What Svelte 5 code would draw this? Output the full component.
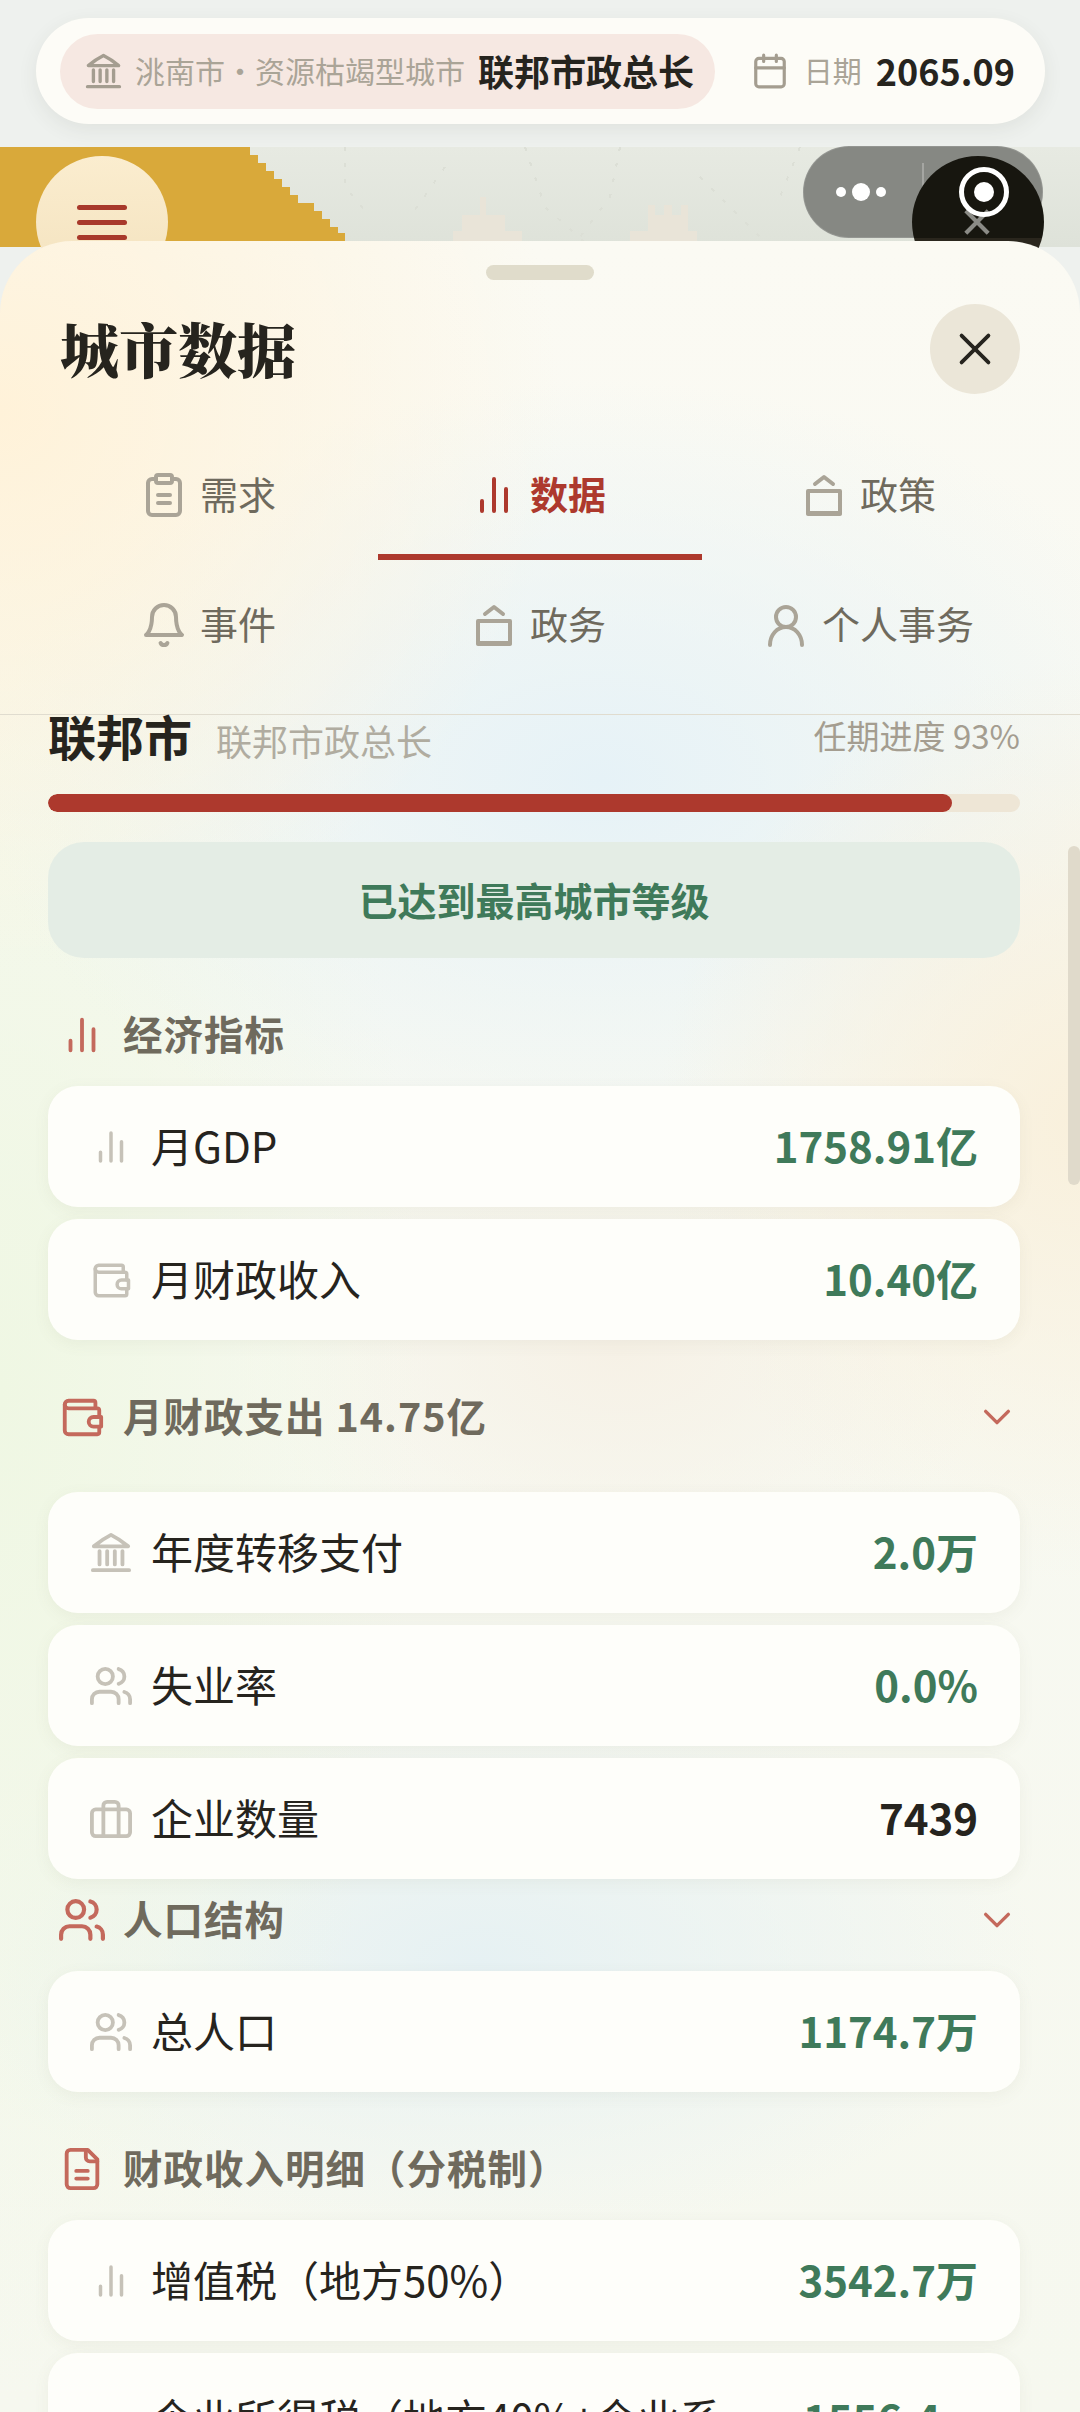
<script>
  const tabs = [
    { label: '需求', icon: 'clipboard' },
    { label: '数据', icon: 'bars', active: true },
    { label: '政策', icon: 'house' },
    { label: '事件', icon: 'bell' },
    { label: '政务', icon: 'house' },
    { label: '个人事务', icon: 'user' }
  ];

  const groups = [
    {
      title: '经济指标',
      icon: 'bars',
      rows: [
        { icon: 'bars', label: '月GDP', value: '1758.91亿' },
        { icon: 'wallet', label: '月财政收入', value: '10.40亿' }
      ]
    },
    {
      title: '月财政支出 14.75亿',
      icon: 'wallet',
      fold: true,
      open: true,
      rows: [
        { icon: 'bank', label: '年度转移支付', value: '2.0万' },
        { icon: 'users', label: '失业率', value: '0.0%' },
        { icon: 'case', label: '企业数量', value: '7439', plain: true }
      ]
    },
    {
      title: '人口结构',
      icon: 'users',
      fold: true,
      tight: true,
      rows: [{ icon: 'users', label: '总人口', value: '1174.7万' }]
    },
    {
      title: '财政收入明细（分税制）',
      icon: 'file',
      rows: [
        { icon: 'bars', label: '增值税（地方50%）', value: '3542.7万' },
        { icon: 'bars', label: '企业所得税（地方40%+企业系数）', value: '1556.4万', wrap: true }
      ]
    }
  ];

  // these three run edge to edge in the reference, so crop their box a little
  const tightBox = ['users', 'bank', 'case'];
</script>

{#snippet glyph(name, cls)}
  <svg class={cls} viewBox={tightBox.includes(name) ? '1 1 22 22' : '0 0 24 24'} fill="none" stroke="currentColor" stroke-linecap="round" stroke-linejoin="round">
    {#if name === 'bars'}
      <path d="M6 20v-5M12 20V4M18 20V9" />
    {:else if name === 'clipboard'}
      <rect x="8" y="2" width="8" height="4" rx="1" />
      <path d="M16 4h2a2 2 0 0 1 2 2v14a2 2 0 0 1-2 2H6a2 2 0 0 1-2-2V6a2 2 0 0 1 2-2h2" />
      <path d="M9 12h6M9 16h6" />
    {:else if name === 'house'}
      <path d="M7.500 6.500l4.500-3.500 4.500 3.500" />
      <path d="M4 10h16v11.500H4z" />
      <path d="M4 21h16" />
    {:else if name === 'bell'}
      <path d="M6 8a6 6 0 0 1 12 0c0 7 3 9 3 9H3s3-2 3-9" />
      <path d="M10.300 21a1.900 1.900 0 0 0 3.400 0" />
    {:else if name === 'user'}
      <circle cx="12" cy="8" r="5" />
      <path d="M4 22c0-5 3.500-9 8-9s8 4 8 9" />
    {:else if name === 'users'}
      <circle cx="9" cy="7" r="4" />
      <path d="M2 21v-2a4 4 0 0 1 4-4h6a4 4 0 0 1 4 4v2" />
      <path d="M16 3.130a4 4 0 0 1 0 7.750" />
      <path d="M22 21v-2a4 4 0 0 0-3-3.870" />
    {:else if name === 'wallet'}
      <path d="M19 7V4.500a1 1 0 0 0-1-1H5a2 2 0 0 0 0 4h15a1 1 0 0 1 1 1V12" />
      <path d="M3 5.500V19a2 2 0 0 0 2 2h15a1 1 0 0 0 1-1v-3" />
      <path d="M18 12a2 2 0 0 0 0 5h4v-5z" />
    {:else if name === 'bank'}
      <path d="M2.500 21h19M6 18v-7M10 18v-7M14 18v-7M18 18v-7" />
      <path d="M3 8.500C6 6 9 4 12 2.500c3 1.500 6 3.500 9 6z" />
    {:else if name === 'case'}
      <rect x="2" y="7" width="20" height="14" rx="2" />
      <path d="M16 21V5a2 2 0 0 0-2-2h-4a2 2 0 0 0-2 2v16" />
    {:else if name === 'file'}
      <path d="M15 2H6a2 2 0 0 0-2 2v16a2 2 0 0 0 2 2h12a2 2 0 0 0 2-2V7z" />
      <path d="M14 2v4a2 2 0 0 0 2 2h4" />
      <path d="M9 13h6M9 17h6" />
    {:else if name === 'calendar'}
      <path d="M8 2v4M16 2v4M3 10h18" />
      <rect x="3" y="4" width="18" height="18" rx="2" />
    {:else if name === 'chevron'}
      <path d="M4 8l8 8 8-8" />
    {:else if name === 'close'}
      <path d="M5 5l14 14M19 5L5 19" />
    {/if}
  </svg>
{/snippet}

<div class="screen" lang="zh-CN">
  <header class="topbar">
    <div class="city-pill">
      {@render glyph('bank', 'pill-icon')}
      <span class="city-name">洮南市·资源枯竭型城市</span>
      <strong class="role">联邦市政总长</strong>
    </div>
    <div class="date">
      {@render glyph('calendar', 'date-icon')}
      <span class="date-label">日期</span>
      <strong class="date-value">2065.09</strong>
    </div>
  </header>

  <div class="map">
    <svg class="tiles" viewBox="0 0 1080 100" preserveAspectRatio="none" shape-rendering="crispEdges">
      <path fill="#d9a93a" d="M0 0H250V8H258V16H266V24H274V32H282V40H290V48H298V56H314V64H322V72H330V80H338V86H345V100H0Z" />
      <path fill="#e9e4d8" d="M480 50H486V68H505V84H522V100H453V84H462V68H480Z" />
      <path fill="#e9e4d8" d="M648 58H655V68H664V58H672V68H681V58H688V84H697V100H630V84H648Z" />
      <path fill="none" stroke="#dcdfd6" stroke-width="2" stroke-dasharray="4 12" d="M345 0V40L370 70M445 20L410 70M525 0L545 60L590 100M620 0L610 50L580 90M700 30L770 100M800 0L780 50" />
    </svg>
  </div>

  <button class="menu-btn" aria-label="菜单">
    <span></span><span></span><span></span>
  </button>

  <div class="capsule">
    <span class="dots"><i></i><i class="big"></i><i></i></span>
    <span class="capsule-line"></span>
  </div>
  <div class="round-dark">
    <svg class="dark-x" viewBox="0 0 30 30"><path d="M3 3l24 24M27 3L3 27" /></svg>
    <span class="target"><i></i></span>
  </div>

  <section class="sheet">
    <div class="handle"></div>
    <div class="sheet-head">
      <h1>城市数据</h1>
      <button class="close" aria-label="关闭">{@render glyph('close', 'close-icon')}</button>
    </div>

    <nav class="tabs">
      {#each tabs as tab}
        <div class="tab" class:active={tab.active}>
          {@render glyph(tab.icon, 'tab-icon')}
          <span>{tab.label}</span>
        </div>
      {/each}
    </nav>

    <div class="content">
      <div class="city-row">
        <strong class="city-title">联邦市</strong>
        <span class="city-sub">联邦市政总长</span>
        <span class="term">任期进度 93%</span>
      </div>
      <div class="progress"><div class="progress-fill" style="width: 93%"></div></div>
      <div class="banner"><span>已达到最高城市等级</span></div>

      {#each groups as group}
        <div class="group" class:tight={group.tight}>
          <div class="group-head" class:open={group.open}>
            {@render glyph(group.icon, 'head-icon')}
            <span class="group-title">{group.title}</span>
            {#if group.fold}
              {@render glyph('chevron', 'fold-icon')}
            {/if}
          </div>
          <div class="rows">
            {#each group.rows as row}
              <div class="row" class:multi={row.wrap}>
                {@render glyph(row.icon, 'row-icon')}
                <span class="row-label">{row.label}</span>
                <span class="row-value" class:plain={row.plain} class:wrap={row.wrap}>{row.value}</span>
              </div>
            {/each}
          </div>
        </div>
      {/each}
    </div>

    <div class="scroll-thumb"></div>
  </section>
</div>

<style>
  :global(body) {
    margin: 0;
    background: #eff2ef;
  }

  .screen {
    position: relative;
    width: 1080px;
    height: 2412px;
    overflow: hidden;
    background: #eef1ee;
    font-family: "Noto Sans CJK SC", "Noto Sans", sans-serif;
    color: #26241e;
  }

  .topbar {
    position: relative;
    z-index: 3;
    box-sizing: border-box;
    display: flex;
    align-items: center;
    width: 1009px;
    height: 106px;
    margin: 18px 0 0 36px;
    padding: 0 30px 0 24px;
    background: #fdfcf7;
    border-radius: 53px;
    box-shadow: 0 6px 20px rgba(70, 70, 50, 0.08);
  }

  .city-pill {
    display: flex;
    align-items: center;
    box-sizing: border-box;
    width: 657px;
    height: 75px;
    padding: 0 0 0 25px;
    background: #f6e8e2;
    border-radius: 38px;
    white-space: nowrap;
  }

  :global(.pill-icon) {
    width: 37px;
    height: 37px;
    margin-right: 13px;
    color: #a49d90;
    stroke-width: 2;
  }

  .city-name {
    padding-bottom: 3px;
    font-size: 30px;
    color: #aaa497;
  }

  .role {
    margin-left: 13px;
    padding-bottom: 3px;
    font-size: 36px;
    font-weight: 700;
    color: #26241e;
  }

  .date {
    display: flex;
    align-items: center;
    margin-left: 36px;
    white-space: nowrap;
  }

  :global(.date-icon) {
    width: 38px;
    height: 38px;
    color: #a49d90;
    stroke-width: 2;
  }

  .date-label {
    margin-left: 15px;
    padding-bottom: 2px;
    font-size: 29px;
    color: #aaa497;
  }

  .date-value {
    margin-left: 14px;
    padding-bottom: 2px;
    font-size: 36px;
    font-weight: 700;
  }

  .map {
    position: absolute;
    left: 0;
    top: 147px;
    width: 1080px;
    height: 100px;
    background: linear-gradient(#e7eae2, #dee2d9);
  }

  .tiles {
    display: block;
    width: 100%;
    height: 100%;
  }

  .menu-btn {
    position: absolute;
    left: 36px;
    top: 156px;
    width: 132px;
    height: 132px;
    padding: 0;
    border: 0;
    border-radius: 50%;
    background: linear-gradient(#fbedcf, #f3e2be);
    display: flex;
    flex-direction: column;
    align-items: center;
    justify-content: center;
    gap: 10px;
  }

  .menu-btn span {
    width: 50px;
    height: 5px;
    border-radius: 3px;
    background: #a8392b;
  }

  .capsule {
    position: absolute;
    left: 803px;
    top: 146px;
    box-sizing: border-box;
    width: 240px;
    height: 92px;
    border-radius: 46px;
    background: #868883;
    border: 1px solid rgba(255, 255, 255, 0.12);
  }

  .dots {
    position: absolute;
    left: 32px;
    top: 45px;
    display: flex;
    align-items: center;
    gap: 6px;
    transform: translateY(-50%);
  }

  .dots i {
    width: 10px;
    height: 10px;
    border-radius: 50%;
    background: #fff;
  }

  .dots i.big {
    width: 18px;
    height: 18px;
  }

  .capsule-line {
    position: absolute;
    left: 118px;
    top: 16px;
    width: 2px;
    height: 60px;
    background: #a5a6a2;
  }

  .round-dark {
    position: absolute;
    left: 912px;
    top: 156px;
    width: 132px;
    height: 132px;
    border-radius: 50%;
    background: linear-gradient(#17160f 0, #17160f 82px, #2a261d 82px);
  }

  .dark-x {
    position: absolute;
    left: 51px;
    top: 52px;
    width: 28px;
    height: 28px;
    fill: none;
    stroke: #8b8b86;
    stroke-width: 4.500;
  }

  .target {
    position: absolute;
    left: 47px;
    top: 11px;
    box-sizing: border-box;
    width: 50px;
    height: 50px;
    border: 5px solid #fff;
    border-radius: 50%;
    display: flex;
    align-items: center;
    justify-content: center;
  }

  .target i {
    width: 20px;
    height: 20px;
    border-radius: 50%;
    background: #fff;
  }

  .sheet {
    position: absolute;
    left: 0;
    top: 241px;
    z-index: 2;
    width: 1080px;
    height: 2171px;
    overflow: hidden;
    border-radius: 72px 72px 0 0;
    background:
      radial-gradient(560px 560px at 0 170px, #fff2d9 0%, rgba(255, 242, 217, 0) 100%),
      radial-gradient(420px 460px at 1080px 880px, #f9f0dc 0%, rgba(249, 240, 220, 0) 100%),
      radial-gradient(620px 400px at 600px 540px, #e6f2f7 0%, rgba(230, 242, 247, 0) 100%),
      radial-gradient(420px 1000px at 0 1150px, #eff7e3 0%, rgba(239, 247, 227, 0) 100%),
      radial-gradient(560px 280px at 480px 1720px, #e6f1f3 0%, rgba(230, 241, 243, 0) 100%),
      radial-gradient(380px 240px at 620px 1110px, #f6f1e6 0%, rgba(246, 241, 230, 0) 100%),
      linear-gradient(#fbfaf3 0, #f8f9f2 30%, #f6f8ef 100%);
  }

  .handle {
    width: 108px;
    height: 15px;
    margin: 24px auto 0;
    border-radius: 8px;
    background: #e0dccb;
  }

  .sheet-head {
    display: flex;
    align-items: center;
    justify-content: space-between;
    height: 90px;
    margin-top: 24px;
    padding: 0 60px 0 60px;
  }

  h1 {
    margin: 0;
    padding-bottom: 3px;
    font-family: "Noto Serif CJK SC", "Noto Sans CJK SC", serif;
    font-size: 59px;
    font-weight: 900;
    line-height: 1;
    color: #26241e;
  }

  .close {
    width: 90px;
    height: 90px;
    padding: 0;
    border: 0;
    border-radius: 50%;
    background: #ebe6d8;
    display: flex;
    align-items: center;
    justify-content: center;
  }

  :global(.close-icon) {
    width: 46px;
    height: 46px;
    color: #26241e;
    stroke-width: 2;
  }

  .tabs {
    display: grid;
    grid-template-columns: repeat(3, 330px);
    grid-auto-rows: 130px;
    margin-top: 36px;
    padding: 0 43px 24px;
    border-bottom: 1px solid #e0dccf;
  }

  .tab {
    position: relative;
    display: flex;
    align-items: center;
    justify-content: center;
    gap: 12px;
    font-size: 38px;
    color: #6f6a5d;
  }

  .tab span {
    padding-bottom: 6px;
  }

  .tab.active {
    color: #ad392d;
    font-weight: 700;
  }

  .tab.active::after {
    content: '';
    position: absolute;
    left: 5px;
    right: 1px;
    bottom: 0;
    height: 6px;
    background: #ad392d;
  }

  :global(.tab-icon) {
    width: 48px;
    height: 48px;
    color: #aaa497;
    stroke-width: 2;
  }

  .tab.active :global(.tab-icon) {
    color: #ad392d;
  }

  .content {
    padding: 0 60px 0 48px;
  }

  .city-row {
    display: flex;
    align-items: baseline;
    height: 48px;
    line-height: 40px;
    white-space: nowrap;
  }

  .city-title {
    font-size: 48px;
    font-weight: 700;
  }

  .city-sub {
    margin-left: 24px;
    font-size: 36px;
    color: #b0aca0;
  }

  .term {
    margin-left: auto;
    align-self: flex-start;
    font-size: 33px;
    color: #a49d90;
  }

  .progress {
    height: 18px;
    margin-top: 31px;
    border-radius: 9px;
    background: #eee6d6;
    overflow: hidden;
  }

  .progress-fill {
    height: 100%;
    border-radius: 9px;
    background: #ad392d;
  }

  .banner {
    height: 116px;
    margin-top: 30px;
    border-radius: 36px;
    background: #e4ede5;
    display: flex;
    align-items: center;
    justify-content: center;
    font-size: 39px;
    font-weight: 700;
    color: #3f7a5a;
  }

  .banner span {
    padding-bottom: 3px;
  }

  .group {
    margin-top: 36px;
  }

  .group.tight {
    margin-top: 0;
  }

  .group-head {
    display: flex;
    align-items: center;
    height: 82px;
    margin-bottom: 10px;
    padding-left: 11px;
  }

  .group-head.open {
    margin-bottom: 34px;
  }

  :global(.head-icon) {
    width: 46px;
    height: 46px;
    margin-right: 18px;
    color: #c4695c;
    stroke-width: 2;
  }

  .group-title {
    padding-bottom: 5px;
    font-size: 39.500px;
    font-weight: 700;
    letter-spacing: 1px;
    color: #6f6a5d;
    white-space: nowrap;
  }

  :global(.fold-icon) {
    width: 34px;
    height: 34px;
    margin-left: auto;
    margin-right: 6px;
    color: #c4695c;
    stroke-width: 2.400;
  }

  .rows {
    display: flex;
    flex-direction: column;
    gap: 12px;
  }

  .row {
    box-sizing: border-box;
    display: flex;
    align-items: center;
    min-height: 121px;
    padding: 0 42px;
    border-radius: 30px;
    background: #fefefa;
    box-shadow: 0 4px 16px rgba(120, 110, 80, 0.07);
  }

  .row.multi {
    padding-top: 34px;
    padding-bottom: 34px;
  }

  :global(.row-icon) {
    flex: none;
    width: 42px;
    height: 42px;
    margin-right: 19px;
    color: #c6c2b8;
    stroke-width: 2;
  }

  .row-label {
    flex: 1;
    padding-bottom: 4px;
    font-size: 42px;
    line-height: 60px;
    color: #26241e;
  }

  .row-value {
    margin-left: 20px;
    padding-bottom: 3px;
    font-size: 42px;
    line-height: 60px;
    font-weight: 700;
    color: #3f7a5a;
    white-space: nowrap;
    text-align: right;
  }

  .row-value.plain {
    color: #26241e;
  }

  .row-value.wrap {
    flex: none;
    width: 175px;
    white-space: normal;
    word-break: break-all;
    text-align: left;
  }

  .scroll-thumb {
    position: absolute;
    right: 0;
    top: 605px;
    width: 12px;
    height: 339px;
    border-radius: 6px;
    background: #e0dacb;
  }
</style>
